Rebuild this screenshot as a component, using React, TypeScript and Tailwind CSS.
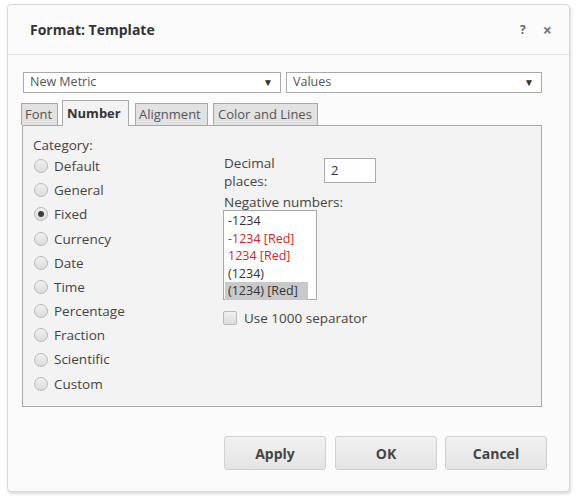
import React from "react";

const font = { fontFamily: '"Open Sans", "Noto Sans", sans-serif' };

function Radio({ label, checked }: { label: string; checked?: boolean }) {
  return (
    <div className="flex items-center h-[24.2px]">
      <div className="ml-[1px] w-[14px] h-[14px] rounded-full border border-[#b9b9b9] bg-gradient-to-b from-[#f0f0f0] to-[#dcdcdc] flex items-center justify-center">
        {checked && <div className="w-[6px] h-[6px] rounded-full bg-[#3c3c3c]" />}
      </div>
      <span className="ml-[6px] text-[13.5px] text-[#444]">{label}</span>
    </div>
  );
}

function Select({ label, w }: { label: string; w: string }) {
  return (
    <div className={`${w} h-[21px] border border-[#a9a9a9] bg-white flex items-center justify-between pl-[6px] pr-[7px]`}>
      <span className="text-[12.5px] text-[#555]">{label}</span>
      <span className="text-[10px] text-[#333]">▼</span>
    </div>
  );
}

export default function App() {
  const cats = ["Default", "General", "Fixed", "Currency", "Date", "Time", "Percentage", "Fraction", "Scientific", "Custom"];
  return (
    <div className="w-[580px] h-[498px] bg-white pt-[4px] pl-[7px]" style={font}>
      <div className="w-[563px] h-[488px] border border-[#d8d8d8] rounded-[4px] bg-[#fbfbfb] shadow-[1px_2px_3px_rgba(0,0,0,0.15)] flex flex-col">
        <div className="h-[50px] shrink-0 flex items-center pl-[22px] pr-[17px] border-b border-[#e4e4e4]">
          <span className="text-[14px] font-bold text-[#333] flex-1">Format: Template</span>
          <span className="text-[12px] font-bold text-[#666] mr-[17px]">?</span>
          <span className="text-[16px] font-bold text-[#777]">×</span>
        </div>
        <div className="pl-[14px] pt-[17px] flex flex-col">
          <div className="flex ml-[1px] gap-[5px]">
            <Select label="New Metric" w="w-[258px]" />
            <Select label="Values" w="w-[256px]" />
          </div>
          <div className="flex items-end ml-[-1px] mt-[7px] h-[25px]">
            <div className="w-[37px] h-[22px] border border-b-0 border-[#a8a8a8] bg-[#e2e2e2] text-[13px] text-[#555] pl-[3px] leading-[21px]">Font</div>
            <div className="ml-[4px] w-[67px] h-[26px] mb-[-1px] border border-b-0 border-[#a8a8a8] bg-[#f3f3f3] text-[13px] font-bold text-[#333] pl-[4px] leading-[24px] relative z-10">Number</div>
            <div className="ml-[6px] w-[73px] h-[22px] border border-b-0 border-[#a8a8a8] bg-[#e2e2e2] text-[13px] text-[#555] pl-[3px] leading-[21px]">Alignment</div>
            <div className="ml-[5px] w-[105px] h-[22px] border border-b-0 border-[#a8a8a8] bg-[#e2e2e2] text-[13px] text-[#555] pl-[4px] leading-[21px]">Color and Lines</div>
          </div>
          <div className="w-[520px] h-[282px] border border-[#a8a8a8] bg-[#f3f3f3] flex pl-[10px] pt-[10px]">
            <div className="w-[191px] flex flex-col">
              <div className="h-[18px] leading-[18px] text-[13.5px] text-[#444]">Category:</div>
              {cats.map((c) => (
                <Radio key={c} label={c} checked={c === "Fixed"} />
              ))}
            </div>
            <div className="flex flex-col pt-[18px]">
              <div className="flex">
                <div className="w-[100px] text-[13.5px] leading-[18px] text-[#444]">
                  Decimal
                  <br />
                  places:
                </div>
                <div className="mt-[4px] w-[52px] h-[25px] border border-[#a9a9a9] bg-white text-[13px] text-[#333] pl-[6px] leading-[23px]">2</div>
              </div>
              <div className="mt-[4px] text-[13.5px] leading-[16px] text-[#444]">Negative numbers:</div>
              <div className="ml-[-1px] w-[94px] h-[90px] border border-[#a9a9a9] bg-white pt-[1px] pl-[1px] text-[12.5px]">
                <div className="w-[83px] leading-[17.5px] pl-[3px] text-[#333]">-1234</div>
                <div className="w-[83px] leading-[17.5px] pl-[3px] text-[#d8232c]">-1234 [Red]</div>
                <div className="w-[83px] leading-[17.5px] pl-[3px] text-[#d8232c]">1234 [Red]</div>
                <div className="w-[83px] leading-[17.5px] pl-[3px] text-[#333]">(1234)</div>
                <div className="w-[83px] leading-[17.5px] pl-[3px] text-[#333] bg-[#c9c9c9]">(1234) [Red]</div>
              </div>
              <div className="flex items-center mt-[8px] ml-[-1px]">
                <div className="w-[14px] h-[14px] rounded-[2px] border border-[#b9b9b9] bg-gradient-to-b from-[#f0f0f0] to-[#dcdcdc]" />
                <span className="ml-[7px] text-[13.5px] text-[#444]">Use 1000 separator</span>
              </div>
            </div>
          </div>
          <div className="flex mt-[29px] ml-[202px]">
            {["Apply", "OK", "Cancel"].map((b, i) => (
              <div
                key={b}
                className={`${i === 0 ? "" : i === 1 ? "ml-[9px]" : "ml-[8px]"} w-[102px] h-[34px] rounded-[3px] border border-[#d0d0d0] bg-gradient-to-b from-[#f1f1f1] to-[#e4e4e4] flex items-center justify-center text-[14px] font-bold text-[#444]`}
              >
                {b}
              </div>
            ))}
          </div>
        </div>
      </div>
    </div>
  );
}
